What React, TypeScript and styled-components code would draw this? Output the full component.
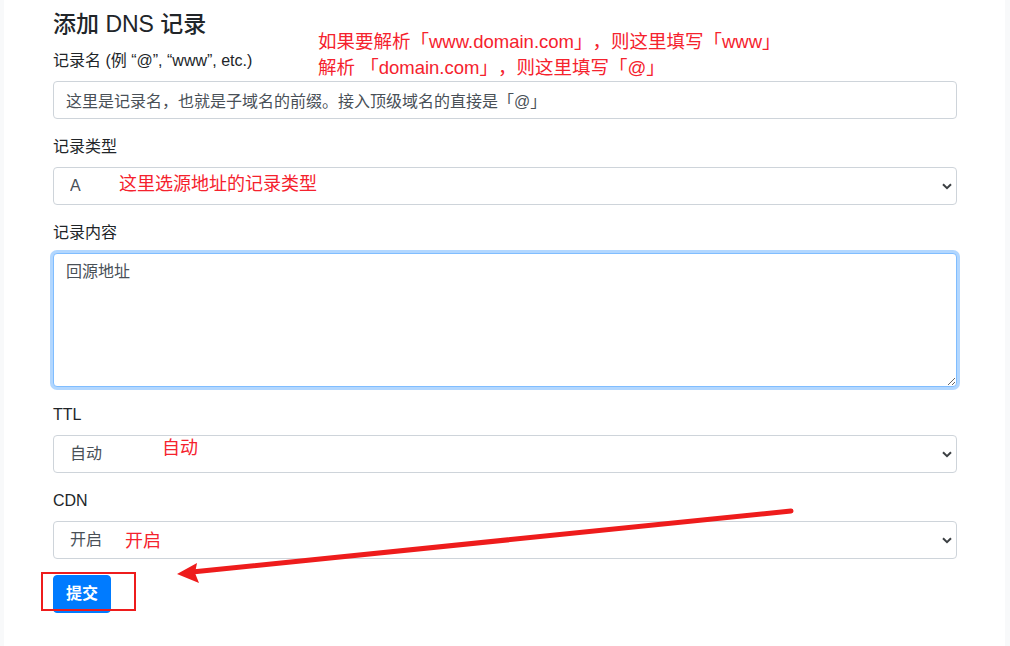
import styled, { createGlobalStyle } from 'styled-components'

const GlobalStyle = createGlobalStyle`
  html, body {
    margin: 0;
    padding: 0;
    background: #f8f9fa;
  }
  body {
    font-family: "Liberation Sans", "Noto Sans CJK SC", sans-serif;
    font-size: 16px;
    line-height: 1.5;
    color: #212529;
    text-spacing-trim: space-all;
  }
  * {
    box-sizing: border-box;
  }
`

const Panel = styled.main`
  position: relative;
  margin: 0 5px 0 4px;
  min-height: 646px;
  background: #fff;
  padding: 11px 48px 0 49px;
`

const Title = styled.h4`
  margin: 0 0 10px;
  font-size: 23px;
  font-weight: 500;
  line-height: 1.2;
`

const Group = styled.div`
  margin-bottom: 16px;
`

const Label = styled.label`
  display: block;
  margin-bottom: 8px;
`

const fieldBase = `
  display: block;
  width: 100%;
  font-family: inherit;
  font-size: 16px;
  line-height: 1.5;
  color: #495057;
  background: #fff;
  border: 1px solid #ced4da;
  border-radius: 4px;
  outline: none;
`

const Input = styled.input`
  ${fieldBase}
  height: 38px;
  padding: 6px 12px;
`

const TextArea = styled.textarea<{ $focused?: boolean }>`
  ${fieldBase}
  height: 134px;
  padding: 6px 12px;
  resize: vertical;
  border-color: ${(p) => (p.$focused ? '#80bdff' : '#ced4da')};
  box-shadow: ${(p) => (p.$focused ? '0 0 0 3px rgba(0, 123, 255, 0.3)' : 'none')};
`

const SelectWrap = styled.div`
  position: relative;
`

const Select = styled.select`
  ${fieldBase}
  height: 38px;
  padding: 6px 24px 6px 16px;
  appearance: none;
  -webkit-appearance: none;
`

const Chevron = styled.svg`
  position: absolute;
  right: 5px;
  top: 16px;
  width: 10px;
  height: 7px;
  pointer-events: none;
`

const SubmitButton = styled.button`
  height: 38px;
  padding: 6px 12px;
  font-family: inherit;
  font-size: 16px;
  font-weight: 700;
  line-height: 1.5;
  color: #fff;
  background: #007bff;
  border: 1px solid #007bff;
  border-radius: 4px;
`

const Note = styled.div<{ $x: number; $y: number; $size?: number }>`
  position: absolute;
  left: ${(p) => p.$x}px;
  top: ${(p) => p.$y}px;
  font-size: ${(p) => p.$size ?? 18}px;
  line-height: 26px;
  color: #f5222d;
  white-space: pre;
`

const Highlight = styled.div`
  position: absolute;
  left: 37px;
  top: 572px;
  width: 95px;
  height: 39px;
  border: 2px solid #ee1c1c;
`

const ArrowLayer = styled.svg`
  position: absolute;
  left: 0;
  top: 0;
  width: 100%;
  height: 100%;
  pointer-events: none;
`

function SelectField({ value }: { value: string }) {
  return (
    <SelectWrap>
      <Select defaultValue={value}>
        <option>{value}</option>
      </Select>
      <Chevron viewBox="0 0 10 7">
        <path d="M1 1.2 L5 5.2 L9 1.2" fill="none" stroke="#3c4043" strokeWidth="2" />
      </Chevron>
    </SelectWrap>
  )
}

export default function App() {
  return (
    <>
      <GlobalStyle />
      <Panel>
        <Title>添加 DNS 记录</Title>
        <form onSubmit={(e) => e.preventDefault()}>
          <Group>
            <Label>记录名 (例 “@”, “www”, etc.)</Label>
            <Input defaultValue="这里是记录名，也就是子域名的前缀。接入顶级域名的直接是「@」" />
          </Group>
          <Group>
            <Label>记录类型</Label>
            <SelectField value="A" />
          </Group>
          <Group>
            <Label>记录内容</Label>
            <TextArea $focused defaultValue="回源地址" />
          </Group>
          <Group>
            <Label>TTL</Label>
            <SelectField value="自动" />
          </Group>
          <Group>
            <Label>CDN</Label>
            <SelectField value="开启" />
          </Group>
          <SubmitButton type="submit">提交</SubmitButton>
        </form>

        <Note $x={314} $y={29} $size={18.5}>
          {'如果要解析「www.domain.com」，则这里填写「www」\n解析 「domain.com」，则这里填写「@」'}
        </Note>
        <Note $x={115} $y={171}>这里选源地址的记录类型</Note>
        <Note $x={158} $y={435}>自动</Note>
        <Note $x={121} $y={528}>开启</Note>
        <Highlight />
        <ArrowLayer>
          <line x1="787" y1="511" x2="188" y2="572" stroke="#ee1c1c" strokeWidth="5" strokeLinecap="round" />
          <polygon points="173,574 193,563 191,573 195,583" fill="#ee1c1c" />
        </ArrowLayer>
      </Panel>
    </>
  )
}
